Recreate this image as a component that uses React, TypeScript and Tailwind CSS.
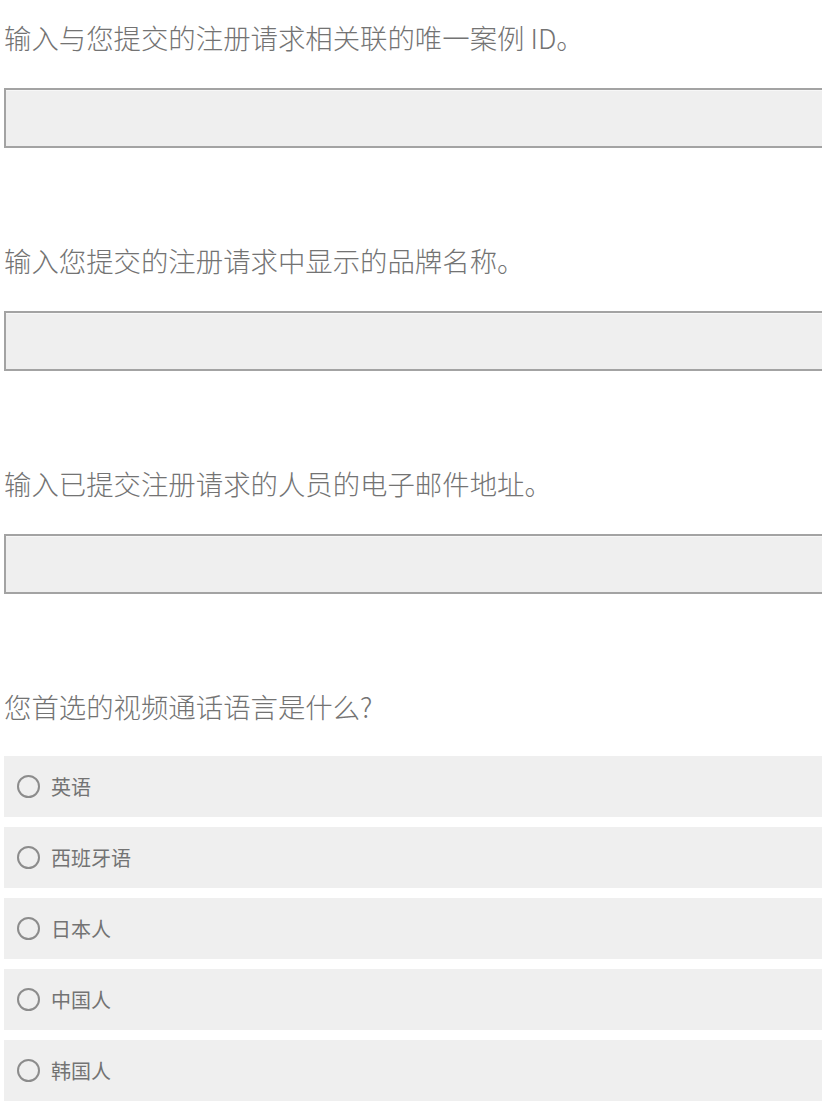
import React from "react";

const font = { fontFamily: '"Noto Sans CJK SC", "Noto Sans", sans-serif' };

function Field({ label }: { label: string }) {
  return (
    <div className="flex flex-col">
      <div className="h-[40px] text-[27.4px] leading-[40px] font-light text-[#737373] whitespace-nowrap">
        {label}
      </div>
      <div className="mt-[31px] h-[60px] border-2 border-r-0 border-[#a3a3a3] bg-[#efefef] shadow-[inset_0_1px_0_#f7f7f7]" />
    </div>
  );
}

const options = ["英语", "西班牙语", "日本人", "中国人", "韩国人"];

export default function App() {
  return (
    <div className="min-h-[1101px] bg-white pl-[4px] pt-[17px]" style={font}>
      <div className="flex flex-col gap-[92px]">
        <Field label="输入与您提交的注册请求相关联的唯一案例 ID。" />
        <Field label="输入您提交的注册请求中显示的品牌名称。" />
        <Field label="输入已提交注册请求的人员的电子邮件地址。" />
        <div className="flex flex-col">
          <div className="h-[40px] text-[27.4px] leading-[40px] font-light text-[#737373] whitespace-nowrap">
            您首选的视频通话语言是什么?
          </div>
          <div className="mt-[30px] flex flex-col gap-[10px]">
            {options.map((o) => (
              <div
                key={o}
                className="flex h-[61px] items-center bg-[#efefef] pl-[13px]"
              >
                <span className="h-[23px] w-[23px] rounded-full border-2 border-[#8c8c8c]" />
                <span className="ml-[11px] text-[20px] leading-none text-[#737373]">
                  {o}
                </span>
              </div>
            ))}
          </div>
        </div>
      </div>
    </div>
  );
}
